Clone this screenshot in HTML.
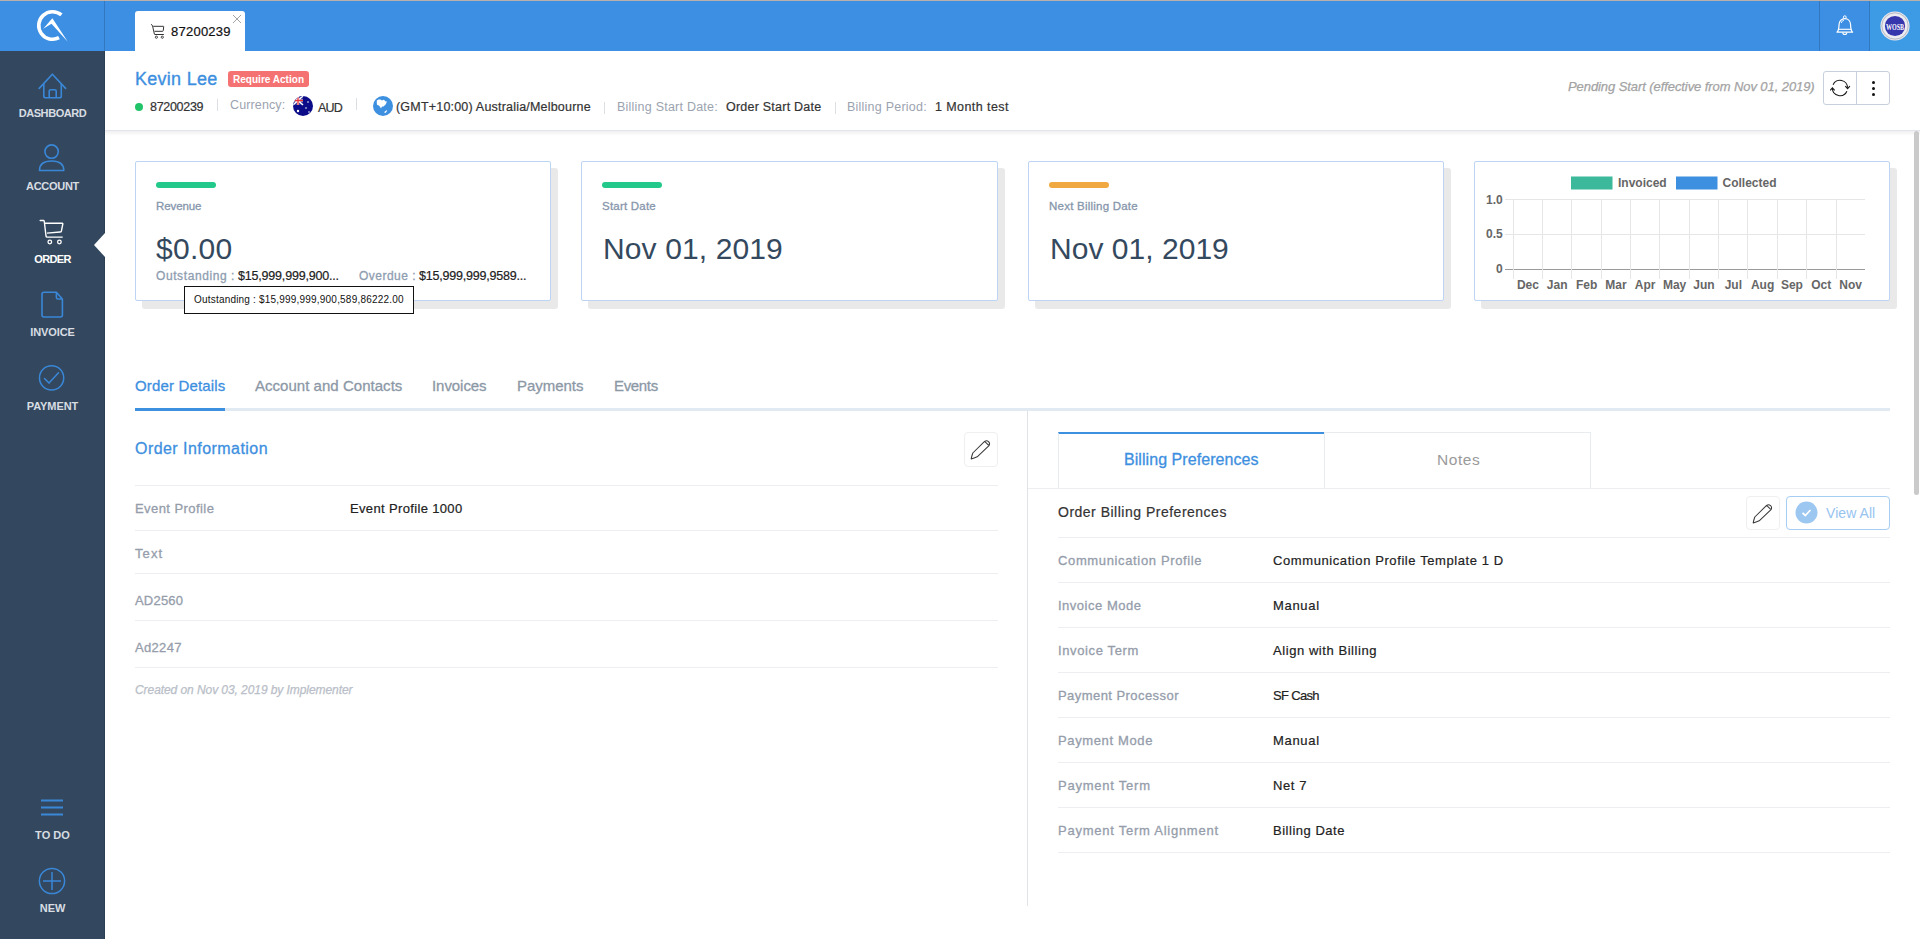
<!DOCTYPE html>
<html><head><meta charset="utf-8">
<style>
*{box-sizing:border-box;margin:0;padding:0}
html,body{width:1920px;height:939px;overflow:hidden;background:#fff;font-family:"Liberation Sans",sans-serif;position:relative}
.a{position:absolute;white-space:nowrap}
#topline{left:0;top:0;width:1920px;height:1px;background:#b9b0aa}
#hdr{left:0;top:1px;width:1920px;height:50px;background:#3d8fe3}
#sb{left:0;top:51px;width:105px;height:888px;background:#33485e}
.sbl{font-size:11px;font-weight:bold;color:#d8dde3;width:105px;text-align:center;left:0}
.ico{left:0;width:105px}

.t{position:absolute;white-space:nowrap;line-height:1}
.blue{color:#3d8fe0}
.gl{color:#9ba3b0}
.card{position:absolute;top:161px;width:416px;height:140px;background:#fff;border:1px solid #bdd4f4;border-radius:2px}
.shd{position:absolute;top:168px;width:416px;height:141px;background:#e9e9e9;border-radius:3px}
.bar{position:absolute;top:182px;width:60px;height:6px;border-radius:3px}
.clab{font-size:11.5px;color:#8696ab;-webkit-text-stroke:0.3px #8696ab}
.cbig{font-size:30px;color:#34495e}
.hl{position:absolute;height:1px;background:#eceef1}
.lab{font-size:13px;color:#959dab;-webkit-text-stroke:0.3px #959dab}
.val{font-size:13px;color:#222;-webkit-text-stroke:0.2px #222}
</style></head><body>
<div class="a" id="topline"></div>
<div class="a" id="hdr"></div>
<div class="a" style="left:104px;top:1px;width:1px;height:50px;background:#3278c0"></div>
<div class="a" id="sb"></div>
<div class="a" style="left:104px;top:51px;width:1px;height:888px;background:#2c3e51"></div>

<!-- logo -->
<svg class="a" style="left:30px;top:5px" width="45" height="42" viewBox="0 0 45 42">
 <path d="M31.4 9.9 A13.8 13.8 0 1 0 29 32.7" fill="none" stroke="#fff" stroke-width="3.6" stroke-linecap="butt"/>
 <path d="M22.4 13.2 L37.8 36.7 L21.5 18.8 L13.2 23.7 Z" fill="#fff"/>
</svg>
<!-- tab -->
<div class="a" style="left:135px;top:11px;width:110px;height:40px;background:#fff;border-radius:3px 3px 0 0"></div>
<svg class="a" style="left:150px;top:23px" width="16" height="17" viewBox="0 0 16 17">
 <path d="M1 1.5 Q2.2 1.7 2.5 2.6 L4.4 11.2 Q4.5 11.5 5 11.5 H13.9" fill="none" stroke="#333" stroke-width="1"/>
 <path d="M3.2 3.3 H13.3 Q13.8 3.3 13.7 3.8 L13.2 7.8 Q13.1 8.3 12.6 8.3 H4.5" fill="none" stroke="#333" stroke-width="1"/>
 <circle cx="6.4" cy="14.2" r="1.1" fill="none" stroke="#333" stroke-width="0.9"/>
 <circle cx="12.3" cy="14.2" r="1.1" fill="none" stroke="#333" stroke-width="0.9"/>
</svg>
<div class="t" id="tabtxt" style="-webkit-text-stroke:0.2px currentColor;left:171px;top:25px;font-size:13px;color:#111;letter-spacing:0.24px">87200239</div>
<svg class="a" style="left:232px;top:14px" width="10" height="10" viewBox="0 0 10 10"><path d="M1 1L9 9M9 1L1 9" stroke="#9a9a9a" stroke-width="0.9"/></svg>

<!-- header right -->
<div class="a" style="left:1819px;top:1px;width:1px;height:50px;background:#3278c0"></div>
<div class="a" style="left:1869px;top:1px;width:51px;height:50px;background:#3d9be6;border-left:1px solid #3278c0"></div>
<svg class="a" style="left:1835px;top:15px" width="20" height="22" viewBox="0 0 20 22">
 <path d="M2 17.2 C3.6 15.5 4 13.5 4 10 C4 6 6.5 3.6 9.8 3.6 C13.1 3.6 15.6 6 15.6 10 C15.6 13.5 16 15.5 17.6 17.2 Z" fill="none" stroke="#fff" stroke-width="1.2" stroke-linejoin="round"/>
 <path d="M3.6 14.3 H16" stroke="#fff" stroke-width="1.1"/>
 <path d="M6.3 8 C6.6 6.4 7.6 5.5 9 5.2" fill="none" stroke="#fff" stroke-width="0.9"/>
 <circle cx="9.8" cy="2.2" r="1.4" fill="none" stroke="#fff" stroke-width="1"/>
 <path d="M7.8 17.5 A2 2 0 0 0 11.8 17.5" fill="none" stroke="#fff" stroke-width="1.1"/>
</svg>
<svg class="a" style="left:1880px;top:11px" width="30" height="30" viewBox="0 0 30 30">
 <circle cx="15" cy="15" r="14.6" fill="#e6e6ee"/>
 <circle cx="15" cy="15" r="13.2" fill="none" stroke="#b0b0b8" stroke-width="0.8"/>
 <circle cx="15" cy="15" r="12" fill="#ececf2"/>
 <circle cx="15" cy="15" r="10.1" fill="#3636ad"/>
 <text x="6" y="18.6" font-size="8.5" font-family="Liberation Serif" font-weight="bold" fill="#fff" textLength="18" lengthAdjust="spacingAndGlyphs">WOSB</text>
</svg>

<!-- sidebar -->
<svg class="a" style="left:38px;top:73px" width="29" height="27" viewBox="0 0 29 27">
 <path d="M1.2 15.4 L14.4 1.2 L27.6 15.4" fill="none" stroke="#3a87d8" stroke-width="1.6" stroke-linecap="round" stroke-linejoin="round"/>
 <path d="M5.8 11 V23 Q5.8 24.8 7.6 24.8 H21.5 Q23.3 24.8 23.3 23 V11" fill="none" stroke="#3a87d8" stroke-width="1.6"/>
 <path d="M11.2 24.8 V18 Q11.2 16.7 12.5 16.7 H16.9 Q18.2 16.7 18.2 18 V24.8" fill="none" stroke="#3a87d8" stroke-width="1.6"/>
</svg>
<div class="t sbl" id="s1" style="top:107.7px;letter-spacing:-0.44px">DASHBOARD</div>
<svg class="a" style="left:38px;top:143px" width="28" height="30" viewBox="0 0 28 30">
 <circle cx="13.6" cy="8.6" r="6.7" fill="none" stroke="#3a87d8" stroke-width="1.6"/>
 <path d="M1.5 27.5 C1.5 20.5 7 18 13.6 18 C20.5 18 25.8 20.5 25.8 27.5 Z" fill="none" stroke="#3a87d8" stroke-width="1.6" stroke-linejoin="round"/>
</svg>
<div class="t sbl" id="s2" style="top:180.7px;letter-spacing:-0.3px">ACCOUNT</div>
<svg class="a" style="left:39px;top:219px" width="26" height="27" viewBox="0 0 26 27">
 <path d="M1.2 1.5 H4.6 Q5.2 1.5 5.3 2.5 L7.0 17 Q7.2 18.1 8.2 18.1 H23.2" fill="none" stroke="#fff" stroke-width="1.4" stroke-linecap="round"/>
 <path d="M5.9 4.3 H23.3 Q24 4.3 23.8 5.2 L22.4 12 Q22.1 13 21 13 L8 14.1" fill="none" stroke="#fff" stroke-width="1.4" stroke-linejoin="round"/>
 <circle cx="10.8" cy="23" r="1.8" fill="none" stroke="#fff" stroke-width="1.3"/>
 <circle cx="20.4" cy="23" r="1.8" fill="none" stroke="#fff" stroke-width="1.3"/>
</svg>
<div class="t sbl" id="s3" style="top:254.2px;color:#fff;letter-spacing:-0.63px">ORDER</div>
<svg class="a" style="left:94px;top:233px" width="11" height="24" viewBox="0 0 11 24"><path d="M11 0 L0 12 L11 24Z" fill="#fff"/></svg>
<svg class="a" style="left:40px;top:290px" width="25" height="29" viewBox="0 0 25 29">
 <path d="M22.4 9 V25 Q22.4 27 20.4 27 H4 Q2 27 2 25 V4.2 Q2 2.2 4 2.2 H16.4 L22.4 9 M16.4 2.2 V7.4 Q16.4 9 18 9 H22.4" fill="none" stroke="#3a87d8" stroke-width="1.6" stroke-linejoin="round"/>
</svg>
<div class="t sbl" id="s4" style="top:327.2px;letter-spacing:-0.11px">INVOICE</div>
<svg class="a" style="left:38px;top:364px" width="28" height="28" viewBox="0 0 28 28">
 <circle cx="13.6" cy="13.9" r="12.1" fill="none" stroke="#3a87d8" stroke-width="1.5"/>
 <path d="M6.5 14.5 L11 19.1 L20.5 8.7" fill="none" stroke="#3a87d8" stroke-width="1.5" stroke-linecap="round" stroke-linejoin="round"/>
</svg>
<div class="t sbl" id="s5" style="top:400.7px;letter-spacing:-0.09px">PAYMENT</div>
<svg class="a" style="left:41px;top:799px" width="23" height="17" viewBox="0 0 23 17">
 <path d="M0 1.5H22M0 8.5H22M0 15.5H22" stroke="#3a87d8" stroke-width="2"/>
</svg>
<div class="t sbl" id="s6" style="top:829.7px;letter-spacing:0.04px">TO DO</div>
<svg class="a" style="left:38px;top:867px" width="28" height="28" viewBox="0 0 28 28">
 <circle cx="14" cy="14" r="12.6" fill="none" stroke="#3a87d8" stroke-width="1.5"/>
 <path d="M14 5 V23 M5 14 H23" stroke="#3a87d8" stroke-width="1.5"/>
</svg>
<div class="t sbl" id="s7" style="top:902.7px;letter-spacing:-0.09px">NEW</div>


<!-- page header -->
<div class="t blue" id="name" style="-webkit-text-stroke:0.35px currentColor;left:135px;top:69.5px;font-size:18px;letter-spacing:0.27px">Kevin Lee</div>
<div class="a" style="left:228px;top:71px;width:81px;height:16px;background:#f57272;border-radius:3px"></div>
<div class="t" id="badge" style="left:233px;top:74.5px;font-size:10px;font-weight:bold;color:#fff;letter-spacing:0.02px">Require Action</div>
<div class="a" style="left:135px;top:103px;width:8px;height:8px;border-radius:50%;background:#22c46a"></div>
<div class="t" id="i1" style="-webkit-text-stroke:0.2px currentColor;left:150px;top:100.5px;font-size:12.5px;color:#333;letter-spacing:-0.3px">87200239</div>
<div class="a" style="left:217px;top:99px;width:1px;height:12px;background:#dcdfe6"></div>
<div class="t gl" id="i2" style="left:230px;top:98.5px;font-size:12.5px;letter-spacing:0.13px">Currency:</div>
<svg class="a" style="left:293px;top:96px" width="20" height="20" viewBox="0 0 20 20">
 <defs><clipPath id="cc"><circle cx="10" cy="10" r="10"/></clipPath></defs>
 <g clip-path="url(#cc)"><rect width="20" height="20" fill="#0c0c88"/>
 <rect x="0" y="0" width="10" height="9" fill="#2a2e9a"/>
 <path d="M0 0L10 9M10 0L0 9" stroke="#fff" stroke-width="1.5"/>
 <path d="M5 0V9M0 4.5H10" stroke="#fff" stroke-width="2.2"/>
 <path d="M5 0V9M0 4.5H10" stroke="#e8343a" stroke-width="1.3"/>
 <circle cx="5" cy="15" r="1.2" fill="#fff"/><circle cx="15" cy="6" r="0.8" fill="#fff"/><circle cx="13" cy="12" r="0.8" fill="#fff"/><circle cx="16" cy="16" r="0.8" fill="#fff"/>
 </g>
</svg>
<div class="t" id="i3" style="-webkit-text-stroke:0.2px currentColor;left:318px;top:101.5px;font-size:12.5px;color:#333;letter-spacing:-0.85px">AUD</div>
<div class="a" style="left:356px;top:98px;width:1px;height:12px;background:#dcdfe6"></div>
<svg class="a" style="left:373px;top:96px" width="20" height="20" viewBox="0 0 20 20">
 <circle cx="10" cy="10" r="10" fill="#3d8fe0"/>
 <path d="M3.8 4.6 L5.5 3.5 L7.5 3.6 L9 4.6 L10.5 3.8 L11.5 4.2 L12.5 5.5 L13.5 5 L13.6 6.5 L12.6 8.5 L10.5 10.5 L9 10.6 L8 12.5 L7 10.8 L5.8 9.5 L4 8.8 L3.8 7 Z" fill="#fff"/>
 <path d="M11.6 16.2 L13.6 14.6 L12.6 16.6Z" fill="#fff" stroke="#fff" stroke-width="0.8"/>
</svg>
<div class="t" id="i4" style="-webkit-text-stroke:0.2px currentColor;left:396px;top:100.5px;font-size:12.5px;color:#333;letter-spacing:0.2px">(GMT+10:00) Australia/Melbourne</div>
<div class="a" style="left:604px;top:102px;width:1px;height:12px;background:#dcdfe6"></div>
<div class="t gl" id="i5" style="left:617px;top:100.5px;font-size:12.5px;letter-spacing:0.23px">Billing Start Date:</div>
<div class="t" id="i6" style="-webkit-text-stroke:0.2px currentColor;left:726px;top:100.5px;font-size:12.5px;color:#333;letter-spacing:0.23px">Order Start Date</div>
<div class="a" style="left:835px;top:102px;width:1px;height:12px;background:#dcdfe6"></div>
<div class="t gl" id="i7" style="left:847px;top:100.5px;font-size:12.5px;letter-spacing:0.23px">Billing Period:</div>
<div class="t" id="i8" style="-webkit-text-stroke:0.2px currentColor;left:935px;top:100.5px;font-size:12.5px;color:#333;letter-spacing:0.42px">1 Month test</div>
<div class="t" id="pend" style="-webkit-text-stroke:0.25px currentColor;left:1568px;top:80px;font-size:13px;font-style:italic;color:#a3a3a3;letter-spacing:-0.08px">Pending Start (effective from Nov 01, 2019)</div>
<div class="a" style="left:1823px;top:71px;width:67px;height:34px;border:1px solid #c9cfdc;border-radius:3px"></div>
<div class="a" style="left:1856px;top:71px;width:1px;height:34px;background:#c9cfdc"></div>
<svg class="a" style="left:1830px;top:78px" width="21" height="20" viewBox="0 0 21 20">
 <path d="M3.1 6.7 A7.6 7.6 0 0 1 17.6 9.8" fill="none" stroke="#1a1a1a" stroke-width="1.15"/>
 <path d="M15.3 8.2 L17.6 10.6 L19.9 8.2" fill="none" stroke="#1a1a1a" stroke-width="1.15"/>
 <path d="M16.9 13.3 A7.6 7.6 0 0 1 2.4 10.3" fill="none" stroke="#1a1a1a" stroke-width="1.15"/>
 <path d="M0.2 12.4 L2.4 9.9 L4.7 12.4" fill="none" stroke="#1a1a1a" stroke-width="1.15"/>
</svg>
<div class="a" style="left:1872px;top:81px;width:3px;height:3px;border-radius:50%;background:#111"></div>
<div class="a" style="left:1872px;top:87px;width:3px;height:3px;border-radius:50%;background:#111"></div>
<div class="a" style="left:1872px;top:93px;width:3px;height:3px;border-radius:50%;background:#111"></div>
<div class="a" style="left:105px;top:130px;width:1815px;height:1px;background:#e2e6ea"></div>
<div class="a" style="left:105px;top:131px;width:1815px;height:5px;background:linear-gradient(#f0f0f0,#fff)"></div>
<div class="a" style="left:1914px;top:131px;width:5px;height:364px;border-radius:3px;background:#cacaca"></div>

<!-- cards -->
<div class="shd" style="left:142px"></div><div class="card" style="left:135px"></div>
<div class="shd" style="left:588px;width:417px"></div><div class="card" style="left:581px;width:417px"></div>
<div class="shd" style="left:1035px"></div><div class="card" style="left:1028px"></div>
<div class="shd" style="left:1481px"></div><div class="card" style="left:1474px"></div>
<div class="bar" style="left:156px;background:#22c98a"></div>
<div class="bar" style="left:602px;background:#22c98a"></div>
<div class="bar" style="left:1049px;background:#f0a941"></div>
<div class="t clab" id="c1" style="left:156px;top:201.3px;letter-spacing:-0.09px">Revenue</div>
<div class="t clab" id="c2" style="left:602px;top:201.3px;letter-spacing:0.22px">Start Date</div>
<div class="t clab" id="c3" style="left:1049px;top:201.3px;letter-spacing:0.23px">Next Billing Date</div>
<div class="t cbig" id="c4" style="left:156px;top:234px;letter-spacing:0.29px">$0.00</div>
<div class="t cbig" id="c5" style="left:603px;top:234px;letter-spacing:0.12px">Nov 01, 2019</div>
<div class="t cbig" id="c6" style="left:1050px;top:234px;letter-spacing:0.03px">Nov 01, 2019</div>
<div class="t" id="c7a" style="-webkit-text-stroke:0.3px currentColor;left:156px;top:269.5px;font-size:12px;color:#8e9db0;letter-spacing:0.59px">Outstanding :</div>
<div class="t" id="c7b" style="-webkit-text-stroke:0.2px currentColor;left:238px;top:269.5px;font-size:12.5px;color:#222;letter-spacing:-0.19px">$15,999,999,900...</div>
<div class="t" id="c8a" style="-webkit-text-stroke:0.3px currentColor;left:359px;top:269.5px;font-size:12px;color:#8e9db0;letter-spacing:0.48px">Overdue :</div>
<div class="t" id="c8b" style="-webkit-text-stroke:0.2px currentColor;left:419px;top:269.5px;font-size:12.5px;color:#222;letter-spacing:-0.21px">$15,999,999,9589...</div>
<div class="a" style="left:184px;top:286px;width:230px;height:28px;background:#fff;border:1px solid #111"></div>
<div class="t" id="tip" style="left:194px;top:295px;font-size:10px;color:#111;letter-spacing:0.2px">Outstanding : $15,999,999,900,589,86222.00</div>

<svg class="a" style="left:1474px;top:161px" width="416" height="140" viewBox="0 0 416 140">
 <g shape-rendering="crispEdges"><path d="M30.7 38.6H391.3" stroke="#e6e6e6" stroke-width="1"/><path d="M30.7 73.4H391.3" stroke="#e6e6e6" stroke-width="1"/><path d="M30.7 108.2H391.3" stroke="#9a9a9a" stroke-width="1"/><path d="M39.2 38.6V117.7" stroke="#e6e6e6" stroke-width="1"/><path d="M68.5 38.6V117.7" stroke="#e6e6e6" stroke-width="1"/><path d="M97.9 38.6V117.7" stroke="#e6e6e6" stroke-width="1"/><path d="M127.2 38.6V117.7" stroke="#e6e6e6" stroke-width="1"/><path d="M156.6 38.6V117.7" stroke="#e6e6e6" stroke-width="1"/><path d="M185.9 38.6V117.7" stroke="#e6e6e6" stroke-width="1"/><path d="M215.2 38.6V117.7" stroke="#e6e6e6" stroke-width="1"/><path d="M244.6 38.6V117.7" stroke="#e6e6e6" stroke-width="1"/><path d="M273.9 38.6V117.7" stroke="#e6e6e6" stroke-width="1"/><path d="M303.3 38.6V117.7" stroke="#e6e6e6" stroke-width="1"/><path d="M332.6 38.6V117.7" stroke="#e6e6e6" stroke-width="1"/><path d="M362.0 38.6V117.7" stroke="#e6e6e6" stroke-width="1"/></g>
 <rect x="97" y="15.5" width="41.5" height="13" fill="#3cb89a"/>
 <rect x="202" y="15.5" width="41.5" height="13" fill="#3d8fe0"/>
 <g font-family="Liberation Sans" font-size="12" font-weight="bold" fill="#666">
 <text x="144" y="26">Invoiced</text><text x="248.5" y="26">Collected</text>
 <text x="53.9" y="128" text-anchor="middle">Dec</text><text x="83.2" y="128" text-anchor="middle">Jan</text><text x="112.6" y="128" text-anchor="middle">Feb</text><text x="141.9" y="128" text-anchor="middle">Mar</text><text x="171.2" y="128" text-anchor="middle">Apr</text><text x="200.6" y="128" text-anchor="middle">May</text><text x="229.9" y="128" text-anchor="middle">Jun</text><text x="259.3" y="128" text-anchor="middle">Jul</text><text x="288.6" y="128" text-anchor="middle">Aug</text><text x="317.9" y="128" text-anchor="middle">Sep</text><text x="347.3" y="128" text-anchor="middle">Oct</text><text x="376.6" y="128" text-anchor="middle">Nov</text><text x="28.7" y="42.6" text-anchor="end">1.0</text><text x="28.7" y="77.4" text-anchor="end">0.5</text><text x="28.7" y="112.2" text-anchor="end">0</text>
 </g>
</svg>
<!-- tabs -->
<div class="a" style="left:135px;top:408px;width:1755px;height:3px;background:#e1e9f3"></div>
<div class="a" style="left:135px;top:408px;width:90px;height:3px;background:#3d8fe0"></div>
<div class="t blue" id="t1" style="-webkit-text-stroke:0.3px currentColor;left:135px;top:378px;font-size:15px;letter-spacing:0.15px">Order Details</div>
<div class="t" id="t2" style="-webkit-text-stroke:0.3px currentColor;left:255px;top:378px;font-size:15px;color:#8c98a6;letter-spacing:0.03px">Account and Contacts</div>
<div class="t" id="t3" style="-webkit-text-stroke:0.3px currentColor;left:432px;top:378px;font-size:15px;color:#8c98a6;letter-spacing:-0.06px">Invoices</div>
<div class="t" id="t4" style="-webkit-text-stroke:0.3px currentColor;left:517px;top:378px;font-size:15px;color:#8c98a6;letter-spacing:-0.04px">Payments</div>
<div class="t" id="t5" style="-webkit-text-stroke:0.3px currentColor;left:614px;top:378px;font-size:15px;color:#8c98a6;letter-spacing:-0.33px">Events</div>

<!-- left section -->
<div class="t blue" id="oi" style="-webkit-text-stroke:0.3px currentColor;left:135px;top:441px;font-size:16px;letter-spacing:0.45px">Order Information</div>
<div class="a" style="left:964px;top:432px;width:34px;height:35px;border:1.5px solid #efefef;border-radius:4px"></div>
<svg class="a" style="left:960px;top:428px" width="42" height="42" viewBox="0 0 42 42"><path d="M12.8 25 L24.6 13.4 A3.1 3.1 0 0 1 29 17.6 L17.2 28.8 Q14 30.2 11.2 30.9 Q11.8 27.8 12.8 25 Z M24.6 13.4 L29 17.6" fill="none" stroke="#3a3a3a" stroke-width="1.05" stroke-linejoin="round"/></svg>
<div class="hl" style="left:135px;top:485px;width:863px"></div>
<div class="t lab" id="l1" style="left:135px;top:502px;letter-spacing:0.43px">Event Profile</div>
<div class="t val" id="v1" style="left:350px;top:502px;letter-spacing:0.35px">Event Profile 1000</div>
<div class="hl" style="left:135px;top:530px;width:863px"></div>
<div class="t lab" id="l2" style="left:135px;top:547px;letter-spacing:1.08px">Text</div>
<div class="hl" style="left:135px;top:573px;width:863px"></div>
<div class="t lab" id="l3" style="left:135px;top:594px;letter-spacing:0.2px">AD2560</div>
<div class="hl" style="left:135px;top:620px;width:863px"></div>
<div class="t lab" id="l4" style="left:135px;top:641px;letter-spacing:0.33px">Ad2247</div>
<div class="hl" style="left:135px;top:667px;width:863px"></div>
<div class="t" id="cr" style="-webkit-text-stroke:0.25px currentColor;left:135px;top:684px;font-size:12px;font-style:italic;color:#b9bec8;letter-spacing:-0.07px">Created on Nov 03, 2019 by Implementer</div>

<!-- right section -->
<div class="a" style="left:1027px;top:411px;width:1px;height:495px;background:#dfe3e8"></div>
<div class="a" style="left:1058px;top:432px;width:267px;height:57px;border:1px solid #e9ecef;border-bottom:none;border-top:2px solid #3d8fe0"></div>
<div class="a" style="left:1324px;top:432px;width:267px;height:57px;border:1px solid #e9ecef;border-bottom:none"></div>
<div class="hl" style="left:1028px;top:488px;width:862px"></div>
<div class="t blue" id="bp" style="-webkit-text-stroke:0.3px currentColor;left:1124px;top:452px;font-size:16px;letter-spacing:0.06px">Billing Preferences</div>
<div class="t" id="nt" style="left:1437px;top:452.2px;font-size:15.5px;color:#9a9a9a;letter-spacing:0.55px">Notes</div>
<div class="t" id="obp" style="-webkit-text-stroke:0.2px currentColor;left:1058px;top:505px;font-size:14px;color:#333;letter-spacing:0.5px">Order Billing Preferences</div>
<div class="a" style="left:1746px;top:495.5px;width:34px;height:34.5px;border:1.5px solid #efefef;border-radius:4px"></div>
<svg class="a" style="left:1742px;top:491.5px" width="42" height="42" viewBox="0 0 42 42"><path d="M12.8 25 L24.6 13.4 A3.1 3.1 0 0 1 29 17.6 L17.2 28.8 Q14 30.2 11.2 30.9 Q11.8 27.8 12.8 25 Z M24.6 13.4 L29 17.6" fill="none" stroke="#3a3a3a" stroke-width="1.05" stroke-linejoin="round"/></svg>
<div class="a" style="left:1786px;top:496px;width:104px;height:34px;border:1.5px solid #a6cdf4;border-radius:4px"></div>
<svg class="a" style="left:1795px;top:501px" width="23" height="23" viewBox="0 0 23 23">
 <circle cx="11.5" cy="11.5" r="11" fill="#9cc7f1"/>
 <path d="M7.5 11.8 L10.3 14.5 L15.5 9" fill="none" stroke="#fff" stroke-width="1.8"/>
</svg>
<div class="t" id="va" style="left:1826px;top:506px;font-size:14px;color:#97c3ef;letter-spacing:0.06px">View All</div>
<div class="hl" style="left:1058px;top:537px;width:832px"></div>
<div class="t lab" id="rl0" style="left:1058px;top:554px;letter-spacing:0.64px">Communication Profile</div>
<div class="t val" id="rv0" style="left:1273px;top:554px;letter-spacing:0.59px">Communication Profile Template 1 D</div>
<div class="hl" style="left:1058px;top:582px;width:832px"></div>
<div class="t lab" id="rl1" style="left:1058px;top:599px;letter-spacing:0.51px">Invoice Mode</div>
<div class="t val" id="rv1" style="left:1273px;top:599px;letter-spacing:0.69px">Manual</div>
<div class="hl" style="left:1058px;top:627px;width:832px"></div>
<div class="t lab" id="rl2" style="left:1058px;top:644px;letter-spacing:0.62px">Invoice Term</div>
<div class="t val" id="rv2" style="left:1273px;top:644px;letter-spacing:0.56px">Align with Billing</div>
<div class="hl" style="left:1058px;top:672px;width:832px"></div>
<div class="t lab" id="rl3" style="left:1058px;top:689px;letter-spacing:0.44px">Payment Processor</div>
<div class="t val" id="rv3" style="left:1273px;top:689px;letter-spacing:-0.68px">SF Cash</div>
<div class="hl" style="left:1058px;top:717px;width:832px"></div>
<div class="t lab" id="rl4" style="left:1058px;top:734px;letter-spacing:0.63px">Payment Mode</div>
<div class="t val" id="rv4" style="left:1273px;top:734px;letter-spacing:0.69px">Manual</div>
<div class="hl" style="left:1058px;top:762px;width:832px"></div>
<div class="t lab" id="rl5" style="left:1058px;top:779px;letter-spacing:0.77px">Payment Term</div>
<div class="t val" id="rv5" style="left:1273px;top:779px;letter-spacing:0.61px">Net 7</div>
<div class="hl" style="left:1058px;top:807px;width:832px"></div>
<div class="t lab" id="rl6" style="left:1058px;top:824px;letter-spacing:0.75px">Payment Term Alignment</div>
<div class="t val" id="rv6" style="left:1273px;top:824px;letter-spacing:0.52px">Billing Date</div>
<div class="hl" style="left:1058px;top:852px;width:832px"></div>
</body></html>
